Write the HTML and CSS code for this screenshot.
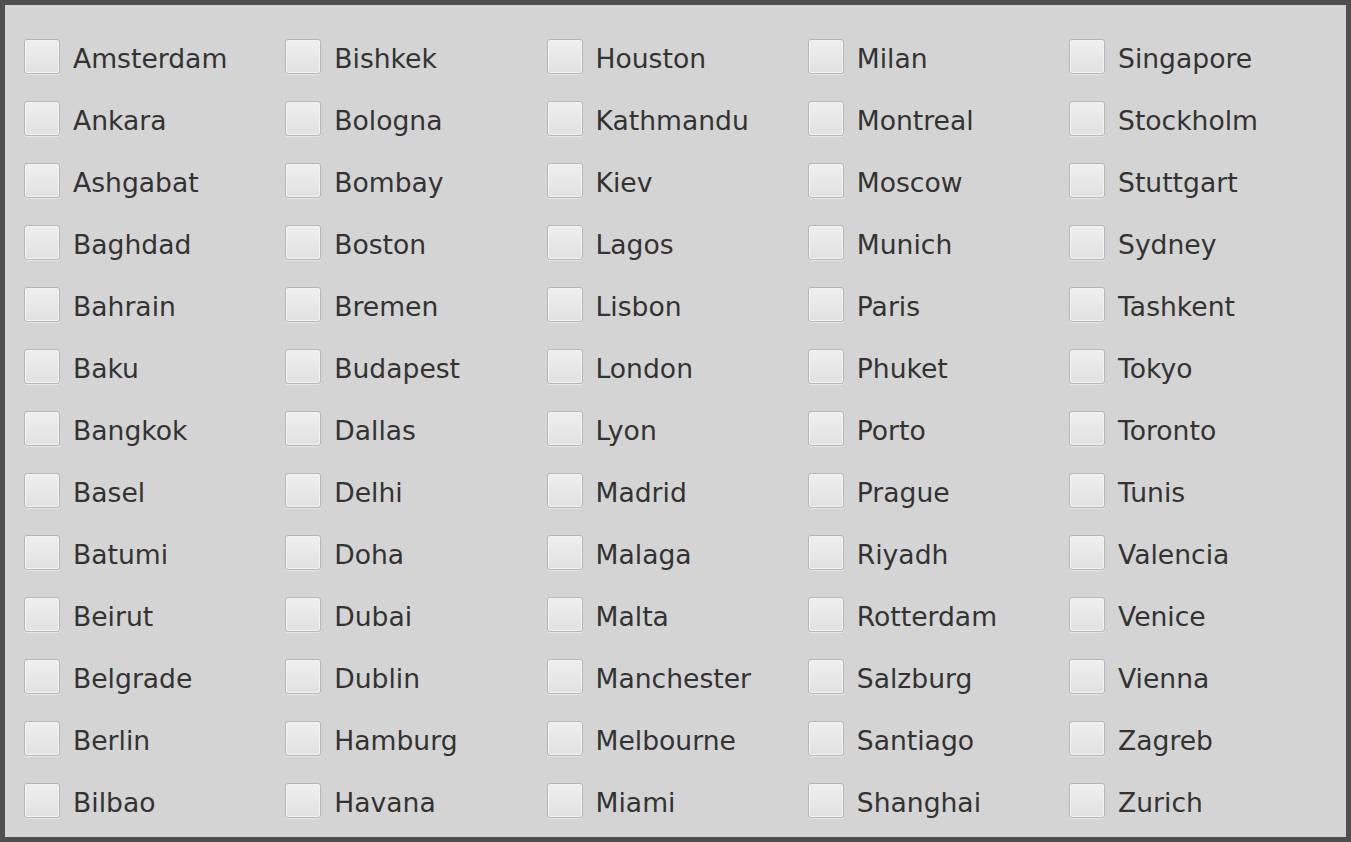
FILE: index.html
```html
<!DOCTYPE html>
<html>
<head>
<meta charset="utf-8">
<link rel="stylesheet" href="styles.css">
</head>
<body>
<div class="panel">
  <div class="grid">
    <label class="item"><span class="box"></span><span class="txt">Amsterdam</span></label>
    <label class="item"><span class="box"></span><span class="txt">Bishkek</span></label>
    <label class="item"><span class="box"></span><span class="txt">Houston</span></label>
    <label class="item"><span class="box"></span><span class="txt">Milan</span></label>
    <label class="item"><span class="box"></span><span class="txt">Singapore</span></label>

    <label class="item"><span class="box"></span><span class="txt">Ankara</span></label>
    <label class="item"><span class="box"></span><span class="txt">Bologna</span></label>
    <label class="item"><span class="box"></span><span class="txt">Kathmandu</span></label>
    <label class="item"><span class="box"></span><span class="txt">Montreal</span></label>
    <label class="item"><span class="box"></span><span class="txt">Stockholm</span></label>

    <label class="item"><span class="box"></span><span class="txt">Ashgabat</span></label>
    <label class="item"><span class="box"></span><span class="txt">Bombay</span></label>
    <label class="item"><span class="box"></span><span class="txt">Kiev</span></label>
    <label class="item"><span class="box"></span><span class="txt">Moscow</span></label>
    <label class="item"><span class="box"></span><span class="txt">Stuttgart</span></label>

    <label class="item"><span class="box"></span><span class="txt">Baghdad</span></label>
    <label class="item"><span class="box"></span><span class="txt">Boston</span></label>
    <label class="item"><span class="box"></span><span class="txt">Lagos</span></label>
    <label class="item"><span class="box"></span><span class="txt">Munich</span></label>
    <label class="item"><span class="box"></span><span class="txt">Sydney</span></label>

    <label class="item"><span class="box"></span><span class="txt">Bahrain</span></label>
    <label class="item"><span class="box"></span><span class="txt">Bremen</span></label>
    <label class="item"><span class="box"></span><span class="txt">Lisbon</span></label>
    <label class="item"><span class="box"></span><span class="txt">Paris</span></label>
    <label class="item"><span class="box"></span><span class="txt">Tashkent</span></label>

    <label class="item"><span class="box"></span><span class="txt">Baku</span></label>
    <label class="item"><span class="box"></span><span class="txt">Budapest</span></label>
    <label class="item"><span class="box"></span><span class="txt">London</span></label>
    <label class="item"><span class="box"></span><span class="txt">Phuket</span></label>
    <label class="item"><span class="box"></span><span class="txt">Tokyo</span></label>

    <label class="item"><span class="box"></span><span class="txt">Bangkok</span></label>
    <label class="item"><span class="box"></span><span class="txt">Dallas</span></label>
    <label class="item"><span class="box"></span><span class="txt">Lyon</span></label>
    <label class="item"><span class="box"></span><span class="txt">Porto</span></label>
    <label class="item"><span class="box"></span><span class="txt">Toronto</span></label>

    <label class="item"><span class="box"></span><span class="txt">Basel</span></label>
    <label class="item"><span class="box"></span><span class="txt">Delhi</span></label>
    <label class="item"><span class="box"></span><span class="txt">Madrid</span></label>
    <label class="item"><span class="box"></span><span class="txt">Prague</span></label>
    <label class="item"><span class="box"></span><span class="txt">Tunis</span></label>

    <label class="item"><span class="box"></span><span class="txt">Batumi</span></label>
    <label class="item"><span class="box"></span><span class="txt">Doha</span></label>
    <label class="item"><span class="box"></span><span class="txt">Malaga</span></label>
    <label class="item"><span class="box"></span><span class="txt">Riyadh</span></label>
    <label class="item"><span class="box"></span><span class="txt">Valencia</span></label>

    <label class="item"><span class="box"></span><span class="txt">Beirut</span></label>
    <label class="item"><span class="box"></span><span class="txt">Dubai</span></label>
    <label class="item"><span class="box"></span><span class="txt">Malta</span></label>
    <label class="item"><span class="box"></span><span class="txt">Rotterdam</span></label>
    <label class="item"><span class="box"></span><span class="txt">Venice</span></label>

    <label class="item"><span class="box"></span><span class="txt">Belgrade</span></label>
    <label class="item"><span class="box"></span><span class="txt">Dublin</span></label>
    <label class="item"><span class="box"></span><span class="txt">Manchester</span></label>
    <label class="item"><span class="box"></span><span class="txt">Salzburg</span></label>
    <label class="item"><span class="box"></span><span class="txt">Vienna</span></label>

    <label class="item"><span class="box"></span><span class="txt">Berlin</span></label>
    <label class="item"><span class="box"></span><span class="txt">Hamburg</span></label>
    <label class="item"><span class="box"></span><span class="txt">Melbourne</span></label>
    <label class="item"><span class="box"></span><span class="txt">Santiago</span></label>
    <label class="item"><span class="box"></span><span class="txt">Zagreb</span></label>

    <label class="item"><span class="box"></span><span class="txt">Bilbao</span></label>
    <label class="item"><span class="box"></span><span class="txt">Havana</span></label>
    <label class="item"><span class="box"></span><span class="txt">Miami</span></label>
    <label class="item"><span class="box"></span><span class="txt">Shanghai</span></label>
    <label class="item"><span class="box"></span><span class="txt">Zurich</span></label>
  </div>
</div>
</body>
</html>
```
FILE: styles.css
```css
html, body {
  margin: 0;
  padding: 0;
}
body {
  background: #4f4f4f;
  width: 1351px;
  height: 842px;
  overflow: hidden;
  padding: 5px;
  box-sizing: border-box;
}
.panel {
  width: 1341px;
  height: 832px;
  background: #d4d4d4;
  box-sizing: border-box;
  padding: 21px 0 0 19px;
}
.grid {
  display: grid;
  grid-template-columns: repeat(5, 261.25px);
  grid-auto-rows: 62px;
}
.item {
  display: flex;
  align-items: center;
  gap: 13px;
  font-family: "DejaVu Sans", sans-serif;
  font-size: 26.6px;
  color: #333333;
}
.box {
  width: 36px;
  height: 35px;
  box-sizing: border-box;
  border: 1px solid #b7b7b7;
  border-radius: 3px;
  background: linear-gradient(#efefef, #e1e1e1);
  box-shadow: inset 0 0 0 1px #f3f3f3, 0 1px 0 #e6e6e6;
  flex: none;
  margin-bottom: 1px;
}
.txt {
  line-height: 1;
  padding-top: 4px;
}
```
